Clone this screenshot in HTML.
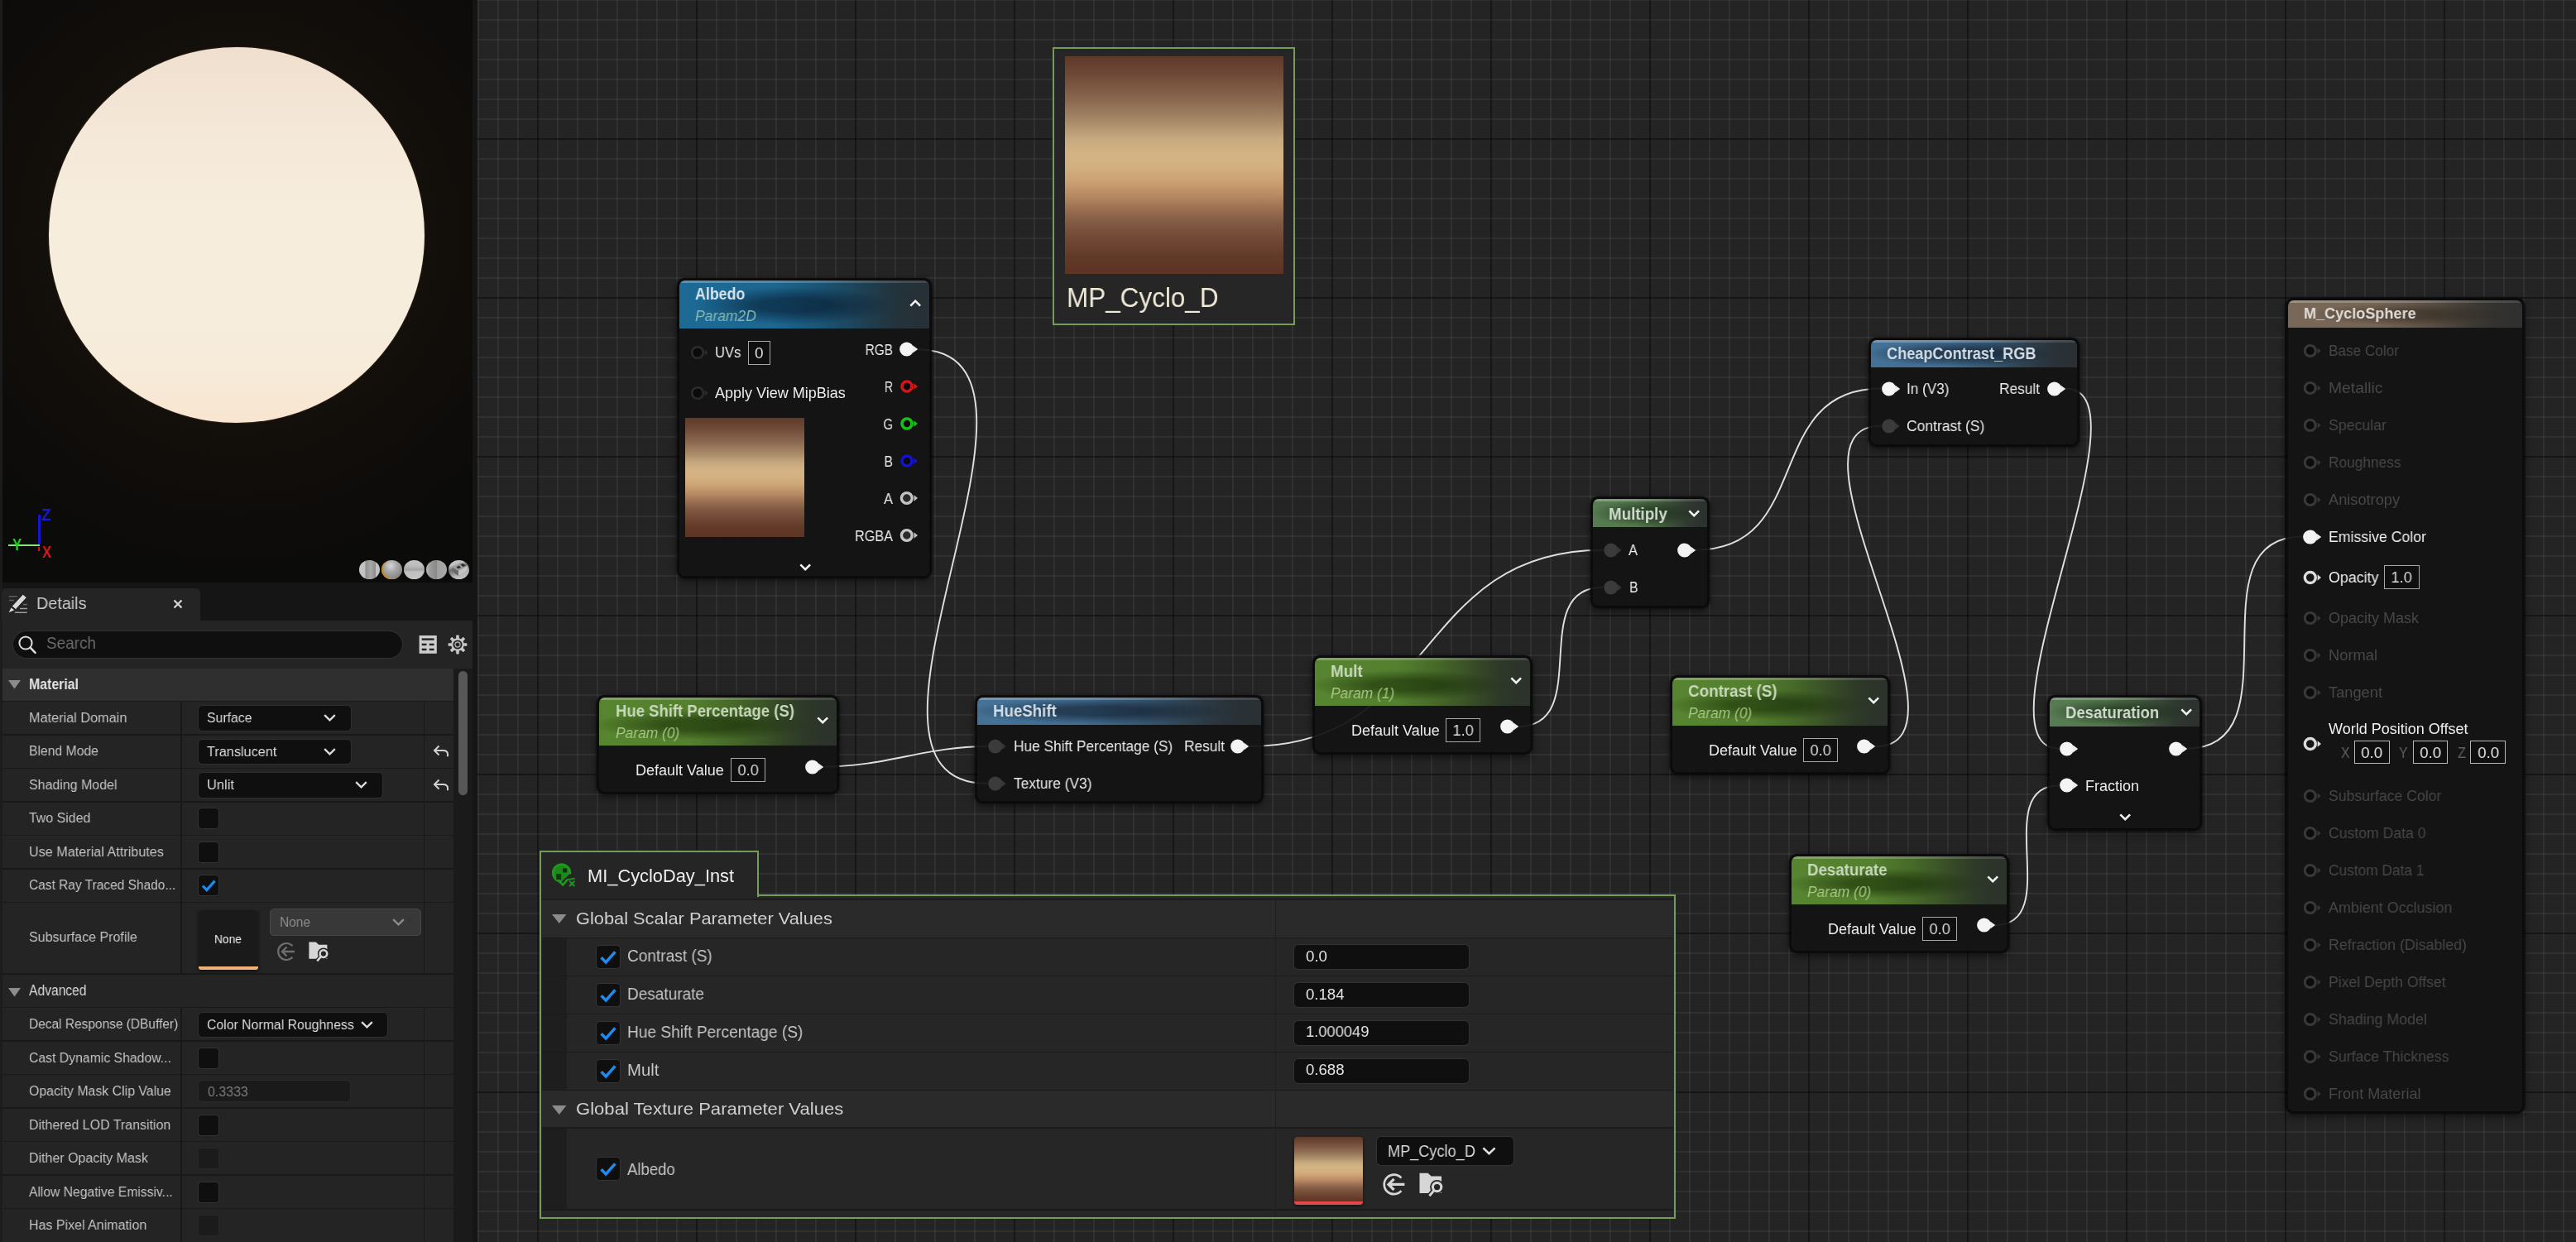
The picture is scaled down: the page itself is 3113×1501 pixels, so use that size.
<!DOCTYPE html><html><head><meta charset="utf-8"><title>Material Editor</title><style>html,body{margin:0;padding:0;background:#151515}body{width:3113px;height:1501px;position:relative;overflow:hidden;font-family:"Liberation Sans",sans-serif}.a{position:absolute;display:block}.t{position:absolute;white-space:nowrap;line-height:0;display:block;will-change:transform}</style></head><body>
<div class="a" style="left:577px;top:0;width:2536px;height:1501px;background-color:#242424;background-image:linear-gradient(90deg,rgba(0,0,0,0.55) 2px,transparent 2px),linear-gradient(180deg,rgba(0,0,0,0.55) 2px,transparent 2px),linear-gradient(90deg,rgba(255,255,255,0.055) 2px,transparent 2px),linear-gradient(180deg,rgba(255,255,255,0.055) 2px,transparent 2px);background-size:192px 192px,192px 192px,24px 24px,24px 24px;background-position:72px 0,0 167px,0px 0,0 23px"></div>
<svg class="a" style="left:0;top:0" width="3113" height="1501"><g fill="none" stroke="#e0e0e0" stroke-width="1.9"><path d="M1108.0 422.3C1317.3 422.3 983.7 947.0 1193.0 947.0"/><path d="M996.0 926.5C1072.0 926.5 1117.0 902.0 1193.0 902.0"/><path d="M1509.0 902.0C1737.4 902.0 1708.6 664.7 1937.0 664.7"/><path d="M1834.0 878.2C1927.2 878.2 1843.8 709.8 1937.0 709.8"/><path d="M2049.0 664.7C2192.9 664.7 2129.1 469.5 2273.0 469.5"/><path d="M2266.0 902.3C2401.5 902.3 2137.5 514.6 2273.0 514.6"/><path d="M2496.0 469.5C2605.7 469.5 2378.8 904.7 2488.5 904.7"/><path d="M2410.5 1118.2C2495.3 1118.2 2403.7 949.3 2488.5 949.3"/><path d="M2642.5 904.7C2778.4 904.7 2646.1 648.5 2782.0 648.5"/></g></svg>
<div class="a " style="left:1272.3px;top:57.3px;width:293.0px;height:336.0px;background:#262626;box-sizing:border-box;border:2.8px solid #759d59"></div>
<div class="a " style="left:1286.5px;top:67.7px;width:264.0px;height:263.5px;background:linear-gradient(180deg,#603a28 0%,#6e4836 8%,#8a6850 20%,#a88a68 30%,#c8aa80 38%,#d4b484 45%,#d2b080 51%,#cba274 57%,#b88a64 64%,#a07454 69%,#835c46 76%,#724a36 83%,#623a28 92%,#5e3424 100%);"></div>
<span class="t" style="left:1288.5px;top:360.4px;font-size:33.0px;color:#f0ead8;transform:scaleX(0.953);transform-origin:0 0;">MP_Cyclo_D</span>
<div class="a" style="left:820.7px;top:338.7px;width:302.3px;height:357.8px;border-radius:7px;background:rgba(18,19,18,0.94);box-shadow:0 0 0 3.2px rgba(9,9,9,.84),0 0 2px 4px rgba(9,9,9,.30),0 4px 8px 4px rgba(0,0,0,.36)"></div>
<div class="a" style="left:820.7px;top:338.7px;width:302.3px;height:58.3px;border-radius:7px 7px 0 0;background:radial-gradient(ellipse 40% 40% at 46% 52%,rgba(4,20,40,.55) 0%,rgba(4,20,40,.55) 35%,transparent 100%),linear-gradient(90deg,rgba(62,66,68,0) 58%,rgba(62,66,68,.5) 100%),linear-gradient(90deg,rgba(30,112,158,1) 0%,rgba(30,112,158,0.96) 38%,rgba(30,112,158,0.62) 68%,rgba(30,112,158,0.28) 88%,rgba(30,112,158,0.16) 100%);overflow:hidden;opacity:.94"><div style="position:absolute;left:0;top:0;right:0;height:3px;background:linear-gradient(90deg,rgba(255,255,255,.30),rgba(255,255,255,.22) 60%,rgba(255,255,255,.12))"></div></div>
<span class="t" style="left:840.0px;top:355.2px;font-size:20.4px;color:#d8e4ec;font-weight:700;transform:scaleX(0.872);transform-origin:0 0;">Albedo</span>
<span class="t" style="left:840.0px;top:381.6px;font-size:17.8px;color:#86b8b0;font-style:italic;transform:scaleX(0.984);transform-origin:0 0;">Param2D</span>
<svg class="a" style="left:1098.8px;top:361.6px;" width="14.4" height="9.0"><path d="M1.3 7.6L7.2 1.7L13.1 7.6" fill="none" stroke="#f0f0f0" stroke-width="2.6"/></svg>
<svg class="a" style="left:832.7px;top:415.5px;" width="24.0" height="20.0"><circle cx="10" cy="10" r="6.8" fill="#0a0a0a" stroke="#2c2c2c" stroke-width="2.6"/><path d="M18.6 6.6L22.6 10L18.6 13.4Z" fill="#2c2c2c"/></svg>
<span class="t" style="left:864.4px;top:426.0px;font-size:18.0px;color:#ececec;transform:scaleX(0.923);transform-origin:0 0;">UVs</span>
<div class="a" style="left:904.3px;top:412.2px;width:26.6px;height:28.6px;box-sizing:border-box;border:1.9px solid #a8a8a8;background:rgba(10,10,10,.5)"></div>
<span class="t" style="left:912.3px;top:426.8px;font-size:19.0px;color:#dedede;transform:scaleX(1.000);transform-origin:50% 0;">0</span>
<svg class="a" style="left:832.7px;top:465.4px;" width="24.0" height="20.0"><circle cx="10" cy="10" r="6.8" fill="#0a0a0a" stroke="#2c2c2c" stroke-width="2.6"/><path d="M18.6 6.6L22.6 10L18.6 13.4Z" fill="#2c2c2c"/></svg>
<span class="t" style="left:864.4px;top:475.4px;font-size:18.0px;color:#ececec;transform:scaleX(1.000);transform-origin:0 0;">Apply View MipBias</span>
<div class="a " style="left:828.0px;top:505.0px;width:144.0px;height:144.0px;background:linear-gradient(180deg,#603a28 0%,#6e4836 8%,#8a6850 20%,#a88a68 30%,#c8aa80 38%,#d4b484 45%,#d2b080 51%,#cba274 57%,#b88a64 64%,#a07454 69%,#835c46 76%,#724a36 83%,#623a28 92%,#5e3424 100%);"></div>
<svg class="a" style="left:1085.5px;top:412.3px;" width="24.0" height="20.0"><circle cx="9.7" cy="10" r="8.6" fill="#f4f4f4"/><path d="M17.2 5.4L23.2 10L17.2 14.6Z" fill="#ececec"/></svg>
<span class="t" style="left:1039.9px;top:422.6px;font-size:18.0px;color:#ececec;transform:scaleX(0.854);transform-origin:100% 0;">RGB</span>
<svg class="a" style="left:1085.5px;top:457.3px;" width="24.0" height="20.0"><circle cx="10" cy="10" r="6" fill="#0a0a0a" stroke="#d41616" stroke-width="3.6"/><path d="M18.2 6.2L23 10L18.2 13.8Z" fill="#d41616"/></svg>
<span class="t" style="left:1065.9px;top:467.6px;font-size:18.0px;color:#ececec;transform:scaleX(0.769);transform-origin:100% 0;">R</span>
<svg class="a" style="left:1085.5px;top:502.3px;" width="24.0" height="20.0"><circle cx="10" cy="10" r="6" fill="#0a0a0a" stroke="#18c018" stroke-width="3.6"/><path d="M18.2 6.2L23 10L18.2 13.8Z" fill="#18c018"/></svg>
<span class="t" style="left:1064.9px;top:512.6px;font-size:18.0px;color:#ececec;transform:scaleX(0.821);transform-origin:100% 0;">G</span>
<svg class="a" style="left:1085.5px;top:547.3px;" width="24.0" height="20.0"><circle cx="10" cy="10" r="6" fill="#0a0a0a" stroke="#1212d0" stroke-width="3.6"/><path d="M18.2 6.2L23 10L18.2 13.8Z" fill="#1212d0"/></svg>
<span class="t" style="left:1066.9px;top:557.6px;font-size:18.0px;color:#ececec;transform:scaleX(0.875);transform-origin:100% 0;">B</span>
<svg class="a" style="left:1085.5px;top:592.3px;" width="24.0" height="20.0"><circle cx="9.8" cy="10" r="6.4" fill="#2a2a2a" stroke="#c4c4c4" stroke-width="3.4"/><path d="M18.6 6.2L23 10L18.6 13.8Z" fill="#c4c4c4"/></svg>
<span class="t" style="left:1066.9px;top:602.6px;font-size:18.0px;color:#ececec;transform:scaleX(0.916);transform-origin:100% 0;">A</span>
<svg class="a" style="left:1085.5px;top:637.3px;" width="24.0" height="20.0"><circle cx="9.8" cy="10" r="6.4" fill="#2a2a2a" stroke="#c4c4c4" stroke-width="3.4"/><path d="M18.6 6.2L23 10L18.6 13.8Z" fill="#c4c4c4"/></svg>
<span class="t" style="left:1027.9px;top:647.6px;font-size:18.0px;color:#ececec;transform:scaleX(0.902);transform-origin:100% 0;">RGBA</span>
<svg class="a" style="left:966.0px;top:680.5px;" width="14.4" height="9.0"><path d="M1.3 1.3L7.2 7.2L13.1 1.3" fill="none" stroke="#f0f0f0" stroke-width="2.6"/></svg>
<div class="a" style="left:724.2px;top:842.7px;width:287.3px;height:114.8px;border-radius:7px;background:rgba(18,19,18,0.94);box-shadow:0 0 0 3.2px rgba(9,9,9,.84),0 0 2px 4px rgba(9,9,9,.30),0 4px 8px 4px rgba(0,0,0,.36)"></div>
<div class="a" style="left:724.2px;top:842.7px;width:287.3px;height:58.3px;border-radius:7px 7px 0 0;background:radial-gradient(ellipse 46% 32% at 43% 57%,rgba(16,36,0,.52) 0%,rgba(16,36,0,.52) 35%,transparent 100%),linear-gradient(90deg,rgba(62,66,68,0) 58%,rgba(62,66,68,.5) 100%),linear-gradient(90deg,rgba(92,140,50,1) 0%,rgba(92,140,50,0.96) 38%,rgba(92,140,50,0.62) 68%,rgba(92,140,50,0.28) 88%,rgba(92,140,50,0.16) 100%);overflow:hidden;opacity:.94"><div style="position:absolute;left:0;top:0;right:0;height:3px;background:linear-gradient(90deg,rgba(255,255,255,.30),rgba(255,255,255,.22) 60%,rgba(255,255,255,.12))"></div></div>
<span class="t" style="left:743.5px;top:859.0px;font-size:20.0px;color:#c8d8bc;font-weight:700;transform:scaleX(0.925);transform-origin:0 0;">Hue Shift Percentage (S)</span>
<span class="t" style="left:743.5px;top:886.0px;font-size:17.8px;color:#a6c682;font-style:italic;transform:scaleX(0.978);transform-origin:0 0;">Param (0)</span>
<svg class="a" style="left:987.3px;top:866.1px;" width="14.4" height="9.0"><path d="M1.3 1.3L7.2 7.2L13.1 1.3" fill="none" stroke="#f0f0f0" stroke-width="2.6"/></svg>
<span class="t" style="left:768.4px;top:931.1px;font-size:18.0px;color:#ececec;transform:scaleX(0.998);transform-origin:0 0;">Default Value</span>
<div class="a" style="left:883.3px;top:916.3px;width:41.8px;height:28.8px;box-sizing:border-box;border:1.9px solid #a8a8a8;background:rgba(10,10,10,.5)"></div>
<span class="t" style="left:891.0px;top:931.0px;font-size:19.0px;color:#dedede;transform:scaleX(0.965);transform-origin:50% 0;">0.0</span>
<svg class="a" style="left:972.0px;top:916.5px;" width="24.0" height="20.0"><circle cx="9.7" cy="10" r="8.6" fill="#f4f4f4"/><path d="M17.2 5.4L23.2 10L17.2 14.6Z" fill="#ececec"/></svg>
<div class="a" style="left:1588.7px;top:794.7px;width:260.3px;height:114.8px;border-radius:7px;background:rgba(18,19,18,0.94);box-shadow:0 0 0 3.2px rgba(9,9,9,.84),0 0 2px 4px rgba(9,9,9,.30),0 4px 8px 4px rgba(0,0,0,.36)"></div>
<div class="a" style="left:1588.7px;top:794.7px;width:260.3px;height:58.3px;border-radius:7px 7px 0 0;background:radial-gradient(ellipse 46% 32% at 43% 57%,rgba(16,36,0,.52) 0%,rgba(16,36,0,.52) 35%,transparent 100%),linear-gradient(90deg,rgba(62,66,68,0) 58%,rgba(62,66,68,.5) 100%),linear-gradient(90deg,rgba(92,140,50,1) 0%,rgba(92,140,50,0.96) 38%,rgba(92,140,50,0.62) 68%,rgba(92,140,50,0.28) 88%,rgba(92,140,50,0.16) 100%);overflow:hidden;opacity:.94"><div style="position:absolute;left:0;top:0;right:0;height:3px;background:linear-gradient(90deg,rgba(255,255,255,.30),rgba(255,255,255,.22) 60%,rgba(255,255,255,.12))"></div></div>
<span class="t" style="left:1608.0px;top:811.0px;font-size:20.0px;color:#c8d8bc;font-weight:700;transform:scaleX(0.939);transform-origin:0 0;">Mult</span>
<span class="t" style="left:1608.0px;top:838.0px;font-size:17.8px;color:#a6c682;font-style:italic;transform:scaleX(0.978);transform-origin:0 0;">Param (1)</span>
<svg class="a" style="left:1824.8px;top:818.1px;" width="14.4" height="9.0"><path d="M1.3 1.3L7.2 7.2L13.1 1.3" fill="none" stroke="#f0f0f0" stroke-width="2.6"/></svg>
<span class="t" style="left:1632.5px;top:882.8px;font-size:18.0px;color:#ececec;transform:scaleX(0.998);transform-origin:0 0;">Default Value</span>
<div class="a" style="left:1747.3px;top:868.0px;width:41.8px;height:28.8px;box-sizing:border-box;border:1.9px solid #a8a8a8;background:rgba(10,10,10,.5)"></div>
<span class="t" style="left:1755.0px;top:882.7px;font-size:19.0px;color:#dedede;transform:scaleX(0.965);transform-origin:50% 0;">1.0</span>
<svg class="a" style="left:1811.5px;top:868.2px;" width="24.0" height="20.0"><circle cx="9.7" cy="10" r="8.6" fill="#f4f4f4"/><path d="M17.2 5.4L23.2 10L17.2 14.6Z" fill="#ececec"/></svg>
<div class="a" style="left:2020.7px;top:818.7px;width:260.3px;height:114.8px;border-radius:7px;background:rgba(18,19,18,0.94);box-shadow:0 0 0 3.2px rgba(9,9,9,.84),0 0 2px 4px rgba(9,9,9,.30),0 4px 8px 4px rgba(0,0,0,.36)"></div>
<div class="a" style="left:2020.7px;top:818.7px;width:260.3px;height:58.3px;border-radius:7px 7px 0 0;background:radial-gradient(ellipse 46% 32% at 43% 57%,rgba(16,36,0,.52) 0%,rgba(16,36,0,.52) 35%,transparent 100%),linear-gradient(90deg,rgba(62,66,68,0) 58%,rgba(62,66,68,.5) 100%),linear-gradient(90deg,rgba(92,140,50,1) 0%,rgba(92,140,50,0.96) 38%,rgba(92,140,50,0.62) 68%,rgba(92,140,50,0.28) 88%,rgba(92,140,50,0.16) 100%);overflow:hidden;opacity:.94"><div style="position:absolute;left:0;top:0;right:0;height:3px;background:linear-gradient(90deg,rgba(255,255,255,.30),rgba(255,255,255,.22) 60%,rgba(255,255,255,.12))"></div></div>
<span class="t" style="left:2040.0px;top:835.0px;font-size:20.0px;color:#c8d8bc;font-weight:700;transform:scaleX(0.940);transform-origin:0 0;">Contrast (S)</span>
<span class="t" style="left:2040.0px;top:862.0px;font-size:17.8px;color:#a6c682;font-style:italic;transform:scaleX(0.978);transform-origin:0 0;">Param (0)</span>
<svg class="a" style="left:2256.8px;top:842.1px;" width="14.4" height="9.0"><path d="M1.3 1.3L7.2 7.2L13.1 1.3" fill="none" stroke="#f0f0f0" stroke-width="2.6"/></svg>
<span class="t" style="left:2064.7px;top:906.9px;font-size:18.0px;color:#ececec;transform:scaleX(0.998);transform-origin:0 0;">Default Value</span>
<div class="a" style="left:2179.3px;top:892.1px;width:41.8px;height:28.8px;box-sizing:border-box;border:1.9px solid #a8a8a8;background:rgba(10,10,10,.5)"></div>
<span class="t" style="left:2187.0px;top:906.8px;font-size:19.0px;color:#dedede;transform:scaleX(0.965);transform-origin:50% 0;">0.0</span>
<svg class="a" style="left:2243.0px;top:892.3px;" width="24.0" height="20.0"><circle cx="9.7" cy="10" r="8.6" fill="#f4f4f4"/><path d="M17.2 5.4L23.2 10L17.2 14.6Z" fill="#ececec"/></svg>
<div class="a" style="left:2164.7px;top:1034.7px;width:260.8px;height:114.8px;border-radius:7px;background:rgba(18,19,18,0.94);box-shadow:0 0 0 3.2px rgba(9,9,9,.84),0 0 2px 4px rgba(9,9,9,.30),0 4px 8px 4px rgba(0,0,0,.36)"></div>
<div class="a" style="left:2164.7px;top:1034.7px;width:260.8px;height:58.3px;border-radius:7px 7px 0 0;background:radial-gradient(ellipse 46% 32% at 43% 57%,rgba(16,36,0,.52) 0%,rgba(16,36,0,.52) 35%,transparent 100%),linear-gradient(90deg,rgba(62,66,68,0) 58%,rgba(62,66,68,.5) 100%),linear-gradient(90deg,rgba(92,140,50,1) 0%,rgba(92,140,50,0.96) 38%,rgba(92,140,50,0.62) 68%,rgba(92,140,50,0.28) 88%,rgba(92,140,50,0.16) 100%);overflow:hidden;opacity:.94"><div style="position:absolute;left:0;top:0;right:0;height:3px;background:linear-gradient(90deg,rgba(255,255,255,.30),rgba(255,255,255,.22) 60%,rgba(255,255,255,.12))"></div></div>
<span class="t" style="left:2184.0px;top:1051.0px;font-size:20.0px;color:#c8d8bc;font-weight:700;transform:scaleX(0.934);transform-origin:0 0;">Desaturate</span>
<span class="t" style="left:2184.0px;top:1078.0px;font-size:17.8px;color:#a6c682;font-style:italic;transform:scaleX(0.978);transform-origin:0 0;">Param (0)</span>
<svg class="a" style="left:2401.3px;top:1058.1px;" width="14.4" height="9.0"><path d="M1.3 1.3L7.2 7.2L13.1 1.3" fill="none" stroke="#f0f0f0" stroke-width="2.6"/></svg>
<span class="t" style="left:2208.5px;top:1122.8px;font-size:18.0px;color:#ececec;transform:scaleX(0.998);transform-origin:0 0;">Default Value</span>
<div class="a" style="left:2323.3px;top:1108.0px;width:41.8px;height:28.8px;box-sizing:border-box;border:1.9px solid #a8a8a8;background:rgba(10,10,10,.5)"></div>
<span class="t" style="left:2331.0px;top:1122.7px;font-size:19.0px;color:#dedede;transform:scaleX(0.965);transform-origin:50% 0;">0.0</span>
<svg class="a" style="left:2387.7px;top:1108.2px;" width="24.0" height="20.0"><circle cx="9.7" cy="10" r="8.6" fill="#f4f4f4"/><path d="M17.2 5.4L23.2 10L17.2 14.6Z" fill="#ececec"/></svg>
<div class="a" style="left:1180.7px;top:842.7px;width:343.3px;height:125.8px;border-radius:7px;background:rgba(18,19,18,0.94);box-shadow:0 0 0 3.2px rgba(9,9,9,.84),0 0 2px 4px rgba(9,9,9,.30),0 4px 8px 4px rgba(0,0,0,.36)"></div>
<div class="a" style="left:1180.7px;top:842.7px;width:343.3px;height:33.6px;border-radius:7px 7px 0 0;background:radial-gradient(ellipse 46% 46% at 43% 50%,rgba(6,14,26,.5) 0%,rgba(6,14,26,.5) 35%,transparent 100%),linear-gradient(90deg,rgba(62,66,68,0) 58%,rgba(62,66,68,.5) 100%),linear-gradient(90deg,rgba(72,120,160,1) 0%,rgba(72,120,160,0.95) 38%,rgba(72,120,160,0.6) 68%,rgba(72,120,160,0.26) 88%,rgba(72,120,160,0.14) 100%);overflow:hidden;opacity:.94"><div style="position:absolute;left:0;top:0;right:0;height:3px;background:linear-gradient(90deg,rgba(255,255,255,.30),rgba(255,255,255,.22) 60%,rgba(255,255,255,.12))"></div></div>
<span class="t" style="left:1200.0px;top:859.3px;font-size:20.0px;color:#d4dce4;font-weight:700;transform:scaleX(0.934);transform-origin:0 0;">HueShift</span>
<svg class="a" style="left:1192.5px;top:891.8px;" width="24.0" height="20.0"><circle cx="9.8" cy="10" r="8.6" fill="#3b3b3b"/><path d="M17.6 5.8L22.6 10L17.6 14.2Z" fill="#353535"/></svg>
<span class="t" style="left:1224.9px;top:901.8px;font-size:18.0px;color:#ececec;transform:scaleX(0.961);transform-origin:0 0;">Hue Shift Percentage (S)</span>
<span class="t" style="left:1428.6px;top:901.8px;font-size:18.0px;color:#ececec;transform:scaleX(0.960);transform-origin:100% 0;">Result</span>
<svg class="a" style="left:1486.3px;top:891.8px;" width="24.0" height="20.0"><circle cx="9.7" cy="10" r="8.6" fill="#f4f4f4"/><path d="M17.2 5.4L23.2 10L17.2 14.6Z" fill="#ececec"/></svg>
<svg class="a" style="left:1192.5px;top:936.9px;" width="24.0" height="20.0"><circle cx="9.8" cy="10" r="8.6" fill="#3b3b3b"/><path d="M17.6 5.8L22.6 10L17.6 14.2Z" fill="#353535"/></svg>
<span class="t" style="left:1224.9px;top:946.9px;font-size:18.0px;color:#ececec;transform:scaleX(0.964);transform-origin:0 0;">Texture (V3)</span>
<div class="a" style="left:1924.7px;top:602.7px;width:138.3px;height:129.3px;border-radius:7px;background:rgba(18,19,18,0.94);box-shadow:0 0 0 3.2px rgba(9,9,9,.84),0 0 2px 4px rgba(9,9,9,.30),0 4px 8px 4px rgba(0,0,0,.36)"></div>
<div class="a" style="left:1924.7px;top:602.7px;width:138.3px;height:34.0px;border-radius:7px 7px 0 0;background:radial-gradient(ellipse 46% 46% at 45% 50%,rgba(6,18,6,.42) 0%,rgba(6,18,6,.42) 35%,transparent 100%),linear-gradient(90deg,rgba(62,66,68,0) 58%,rgba(62,66,68,.5) 100%),linear-gradient(90deg,rgba(92,130,86,1) 0%,rgba(92,130,86,0.95) 38%,rgba(92,130,86,0.6) 68%,rgba(92,130,86,0.28) 88%,rgba(92,130,86,0.16) 100%);overflow:hidden;opacity:.94"><div style="position:absolute;left:0;top:0;right:0;height:3px;background:linear-gradient(90deg,rgba(255,255,255,.30),rgba(255,255,255,.22) 60%,rgba(255,255,255,.12))"></div></div>
<span class="t" style="left:1944.0px;top:621.0px;font-size:20.0px;color:#d0dccc;font-weight:700;transform:scaleX(0.937);transform-origin:0 0;">Multiply</span>
<svg class="a" style="left:2039.8px;top:616.0px;" width="14.4" height="9.0"><path d="M1.3 1.3L7.2 7.2L13.1 1.3" fill="none" stroke="#f0f0f0" stroke-width="2.6"/></svg>
<svg class="a" style="left:1936.5px;top:654.7px;" width="24.0" height="20.0"><circle cx="9.8" cy="10" r="8.6" fill="#3b3b3b"/><path d="M17.6 5.8L22.6 10L17.6 14.2Z" fill="#353535"/></svg>
<span class="t" style="left:1968.4px;top:664.9px;font-size:18.0px;color:#ececec;transform:scaleX(0.916);transform-origin:0 0;">A</span>
<svg class="a" style="left:2026.0px;top:654.7px;" width="24.0" height="20.0"><circle cx="9.7" cy="10" r="8.6" fill="#f4f4f4"/><path d="M17.2 5.4L23.2 10L17.2 14.6Z" fill="#ececec"/></svg>
<svg class="a" style="left:1936.5px;top:699.8px;" width="24.0" height="20.0"><circle cx="9.8" cy="10" r="8.6" fill="#3b3b3b"/><path d="M17.6 5.8L22.6 10L17.6 14.2Z" fill="#353535"/></svg>
<span class="t" style="left:1969.0px;top:710.0px;font-size:18.0px;color:#ececec;transform:scaleX(0.875);transform-origin:0 0;">B</span>
<div class="a" style="left:2260.7px;top:410.7px;width:249.3px;height:126.3px;border-radius:7px;background:rgba(18,19,18,0.94);box-shadow:0 0 0 3.2px rgba(9,9,9,.84),0 0 2px 4px rgba(9,9,9,.30),0 4px 8px 4px rgba(0,0,0,.36)"></div>
<div class="a" style="left:2260.7px;top:410.7px;width:249.3px;height:33.1px;border-radius:7px 7px 0 0;background:radial-gradient(ellipse 46% 46% at 43% 50%,rgba(6,14,26,.5) 0%,rgba(6,14,26,.5) 35%,transparent 100%),linear-gradient(90deg,rgba(62,66,68,0) 58%,rgba(62,66,68,.5) 100%),linear-gradient(90deg,rgba(72,120,160,1) 0%,rgba(72,120,160,0.95) 38%,rgba(72,120,160,0.6) 68%,rgba(72,120,160,0.26) 88%,rgba(72,120,160,0.14) 100%);overflow:hidden;opacity:.94"><div style="position:absolute;left:0;top:0;right:0;height:3px;background:linear-gradient(90deg,rgba(255,255,255,.30),rgba(255,255,255,.22) 60%,rgba(255,255,255,.12))"></div></div>
<span class="t" style="left:2280.0px;top:426.5px;font-size:20.0px;color:#d4dce4;font-weight:700;transform:scaleX(0.907);transform-origin:0 0;">CheapContrast_RGB</span>
<svg class="a" style="left:2272.7px;top:459.5px;" width="24.0" height="20.0"><circle cx="9.7" cy="10" r="8.6" fill="#f4f4f4"/><path d="M17.2 5.4L23.2 10L17.2 14.6Z" fill="#ececec"/></svg>
<span class="t" style="left:2304.3px;top:469.7px;font-size:18.0px;color:#ececec;transform:scaleX(0.953);transform-origin:0 0;">In (V3)</span>
<span class="t" style="left:2414.3px;top:469.7px;font-size:18.0px;color:#ececec;transform:scaleX(0.960);transform-origin:100% 0;">Result</span>
<svg class="a" style="left:2473.0px;top:459.5px;" width="24.0" height="20.0"><circle cx="9.7" cy="10" r="8.6" fill="#f4f4f4"/><path d="M17.2 5.4L23.2 10L17.2 14.6Z" fill="#ececec"/></svg>
<svg class="a" style="left:2272.7px;top:504.6px;" width="24.0" height="20.0"><circle cx="9.8" cy="10" r="8.6" fill="#3b3b3b"/><path d="M17.6 5.8L22.6 10L17.6 14.2Z" fill="#353535"/></svg>
<span class="t" style="left:2304.3px;top:514.8px;font-size:18.0px;color:#ececec;transform:scaleX(0.972);transform-origin:0 0;">Contrast (S)</span>
<div class="a" style="left:2476.7px;top:842.7px;width:181.3px;height:158.3px;border-radius:7px;background:rgba(18,19,18,0.94);box-shadow:0 0 0 3.2px rgba(9,9,9,.84),0 0 2px 4px rgba(9,9,9,.30),0 4px 8px 4px rgba(0,0,0,.36)"></div>
<div class="a" style="left:2476.7px;top:842.7px;width:181.3px;height:35.3px;border-radius:7px 7px 0 0;background:radial-gradient(ellipse 46% 46% at 45% 50%,rgba(6,18,6,.42) 0%,rgba(6,18,6,.42) 35%,transparent 100%),linear-gradient(90deg,rgba(62,66,68,0) 58%,rgba(62,66,68,.5) 100%),linear-gradient(90deg,rgba(92,130,86,1) 0%,rgba(92,130,86,0.95) 38%,rgba(92,130,86,0.6) 68%,rgba(92,130,86,0.28) 88%,rgba(92,130,86,0.16) 100%);overflow:hidden;opacity:.94"><div style="position:absolute;left:0;top:0;right:0;height:3px;background:linear-gradient(90deg,rgba(255,255,255,.30),rgba(255,255,255,.22) 60%,rgba(255,255,255,.12))"></div></div>
<span class="t" style="left:2496.0px;top:861.2px;font-size:20.0px;color:#d0dccc;font-weight:700;transform:scaleX(0.926);transform-origin:0 0;">Desaturation</span>
<svg class="a" style="left:2634.6px;top:855.9px;" width="14.4" height="9.0"><path d="M1.3 1.3L7.2 7.2L13.1 1.3" fill="none" stroke="#f0f0f0" stroke-width="2.6"/></svg>
<svg class="a" style="left:2488.0px;top:894.7px;" width="24.0" height="20.0"><circle cx="9.7" cy="10" r="8.6" fill="#f4f4f4"/><path d="M17.2 5.4L23.2 10L17.2 14.6Z" fill="#ececec"/></svg>
<svg class="a" style="left:2619.6px;top:894.7px;" width="24.0" height="20.0"><circle cx="9.7" cy="10" r="8.6" fill="#f4f4f4"/><path d="M17.2 5.4L23.2 10L17.2 14.6Z" fill="#ececec"/></svg>
<svg class="a" style="left:2488.0px;top:939.3px;" width="24.0" height="20.0"><circle cx="9.7" cy="10" r="8.6" fill="#f4f4f4"/><path d="M17.2 5.4L23.2 10L17.2 14.6Z" fill="#ececec"/></svg>
<span class="t" style="left:2520.4px;top:949.5px;font-size:18.0px;color:#ececec;transform:scaleX(0.997);transform-origin:0 0;">Fraction</span>
<svg class="a" style="left:2561.2px;top:983.0px;" width="14.4" height="9.0"><path d="M1.3 1.3L7.2 7.2L13.1 1.3" fill="none" stroke="#f0f0f0" stroke-width="2.6"/></svg>
<div class="a" style="left:2764.7px;top:362.7px;width:283.8px;height:980.8px;border-radius:7px;background:rgba(18,19,18,0.94);box-shadow:0 0 0 3.2px rgba(9,9,9,.84),0 0 2px 4px rgba(9,9,9,.30),0 4px 8px 4px rgba(0,0,0,.36)"></div>
<div class="a" style="left:2764.7px;top:362.7px;width:283.8px;height:32.9px;border-radius:7px 7px 0 0;background:radial-gradient(ellipse 42% 40% at 50% 52%,rgba(30,20,10,.35) 0%,rgba(30,20,10,.35) 35%,transparent 100%),linear-gradient(90deg,rgba(62,66,68,0) 58%,rgba(62,66,68,.5) 100%),linear-gradient(90deg,rgba(128,110,92,1) 0%,rgba(128,110,92,0.96) 38%,rgba(128,110,92,0.62) 68%,rgba(128,110,92,0.28) 88%,rgba(128,110,92,0.16) 100%);overflow:hidden;opacity:.94"><div style="position:absolute;left:0;top:0;right:0;height:3px;background:linear-gradient(90deg,rgba(255,255,255,.30),rgba(255,255,255,.22) 60%,rgba(255,255,255,.12))"></div></div>
<span class="t" style="left:2784.0px;top:379.3px;font-size:18.6px;color:#e0dcd8;font-weight:700;transform:scaleX(0.972);transform-origin:0 0;">M_CycloSphere</span>
<svg class="a" style="left:2781.8px;top:413.5px;" width="24.0" height="20.0"><circle cx="9.8" cy="10" r="6.5" fill="#0c0c0c" stroke="#383838" stroke-width="3.2"/><path d="M18.6 6.6L22.6 10L18.6 13.4Z" fill="#383838"/></svg>
<span class="t" style="left:2813.5px;top:423.8px;font-size:18.0px;color:#474747;transform:scaleX(0.955);transform-origin:0 0;">Base Color</span>
<svg class="a" style="left:2781.8px;top:458.5px;" width="24.0" height="20.0"><circle cx="9.8" cy="10" r="6.5" fill="#0c0c0c" stroke="#383838" stroke-width="3.2"/><path d="M18.6 6.6L22.6 10L18.6 13.4Z" fill="#383838"/></svg>
<span class="t" style="left:2813.5px;top:468.8px;font-size:18.0px;color:#474747;transform:scaleX(1.073);transform-origin:0 0;">Metallic</span>
<svg class="a" style="left:2781.8px;top:503.5px;" width="24.0" height="20.0"><circle cx="9.8" cy="10" r="6.5" fill="#0c0c0c" stroke="#383838" stroke-width="3.2"/><path d="M18.6 6.6L22.6 10L18.6 13.4Z" fill="#383838"/></svg>
<span class="t" style="left:2813.5px;top:513.8px;font-size:18.0px;color:#474747;transform:scaleX(0.985);transform-origin:0 0;">Specular</span>
<svg class="a" style="left:2781.8px;top:548.5px;" width="24.0" height="20.0"><circle cx="9.8" cy="10" r="6.5" fill="#0c0c0c" stroke="#383838" stroke-width="3.2"/><path d="M18.6 6.6L22.6 10L18.6 13.4Z" fill="#383838"/></svg>
<span class="t" style="left:2813.5px;top:558.8px;font-size:18.0px;color:#474747;transform:scaleX(0.961);transform-origin:0 0;">Roughness</span>
<svg class="a" style="left:2781.8px;top:593.5px;" width="24.0" height="20.0"><circle cx="9.8" cy="10" r="6.5" fill="#0c0c0c" stroke="#383838" stroke-width="3.2"/><path d="M18.6 6.6L22.6 10L18.6 13.4Z" fill="#383838"/></svg>
<span class="t" style="left:2813.5px;top:603.8px;font-size:18.0px;color:#474747;transform:scaleX(1.011);transform-origin:0 0;">Anisotropy</span>
<svg class="a" style="left:2781.8px;top:638.5px;" width="24.0" height="20.0"><circle cx="9.7" cy="10" r="8.6" fill="#f4f4f4"/><path d="M17.2 5.4L23.2 10L17.2 14.6Z" fill="#ececec"/></svg>
<span class="t" style="left:2813.5px;top:648.8px;font-size:18.0px;color:#f0f0f0;transform:scaleX(0.983);transform-origin:0 0;">Emissive Color</span>
<svg class="a" style="left:2781.8px;top:687.5px;" width="24.0" height="20.0"><circle cx="9.8" cy="10" r="6.5" fill="#161616" stroke="#dcdcdc" stroke-width="3.4"/><path d="M18.6 6.2L23 10L18.6 13.8Z" fill="#dcdcdc"/></svg>
<span class="t" style="left:2813.5px;top:697.8px;font-size:18.0px;color:#f0f0f0;transform:scaleX(0.991);transform-origin:0 0;">Opacity</span>
<svg class="a" style="left:2781.8px;top:737.0px;" width="24.0" height="20.0"><circle cx="9.8" cy="10" r="6.5" fill="#0c0c0c" stroke="#383838" stroke-width="3.2"/><path d="M18.6 6.6L22.6 10L18.6 13.4Z" fill="#383838"/></svg>
<span class="t" style="left:2813.5px;top:747.3px;font-size:18.0px;color:#474747;transform:scaleX(1.000);transform-origin:0 0;">Opacity Mask</span>
<svg class="a" style="left:2781.8px;top:782.0px;" width="24.0" height="20.0"><circle cx="9.8" cy="10" r="6.5" fill="#0c0c0c" stroke="#383838" stroke-width="3.2"/><path d="M18.6 6.6L22.6 10L18.6 13.4Z" fill="#383838"/></svg>
<span class="t" style="left:2813.5px;top:792.3px;font-size:18.0px;color:#474747;transform:scaleX(1.017);transform-origin:0 0;">Normal</span>
<svg class="a" style="left:2781.8px;top:827.0px;" width="24.0" height="20.0"><circle cx="9.8" cy="10" r="6.5" fill="#0c0c0c" stroke="#383838" stroke-width="3.2"/><path d="M18.6 6.6L22.6 10L18.6 13.4Z" fill="#383838"/></svg>
<span class="t" style="left:2813.5px;top:837.3px;font-size:18.0px;color:#474747;transform:scaleX(1.015);transform-origin:0 0;">Tangent</span>
<svg class="a" style="left:2781.8px;top:951.5px;" width="24.0" height="20.0"><circle cx="9.8" cy="10" r="6.5" fill="#0c0c0c" stroke="#383838" stroke-width="3.2"/><path d="M18.6 6.6L22.6 10L18.6 13.4Z" fill="#383838"/></svg>
<span class="t" style="left:2813.5px;top:961.8px;font-size:18.0px;color:#474747;transform:scaleX(0.981);transform-origin:0 0;">Subsurface Color</span>
<svg class="a" style="left:2781.8px;top:996.5px;" width="24.0" height="20.0"><circle cx="9.8" cy="10" r="6.5" fill="#0c0c0c" stroke="#383838" stroke-width="3.2"/><path d="M18.6 6.6L22.6 10L18.6 13.4Z" fill="#383838"/></svg>
<span class="t" style="left:2813.5px;top:1006.8px;font-size:18.0px;color:#474747;transform:scaleX(0.979);transform-origin:0 0;">Custom Data 0</span>
<svg class="a" style="left:2781.8px;top:1041.5px;" width="24.0" height="20.0"><circle cx="9.8" cy="10" r="6.5" fill="#0c0c0c" stroke="#383838" stroke-width="3.2"/><path d="M18.6 6.6L22.6 10L18.6 13.4Z" fill="#383838"/></svg>
<span class="t" style="left:2813.5px;top:1051.8px;font-size:18.0px;color:#474747;transform:scaleX(0.962);transform-origin:0 0;">Custom Data 1</span>
<svg class="a" style="left:2781.8px;top:1086.5px;" width="24.0" height="20.0"><circle cx="9.8" cy="10" r="6.5" fill="#0c0c0c" stroke="#383838" stroke-width="3.2"/><path d="M18.6 6.6L22.6 10L18.6 13.4Z" fill="#383838"/></svg>
<span class="t" style="left:2813.5px;top:1096.8px;font-size:18.0px;color:#474747;transform:scaleX(0.996);transform-origin:0 0;">Ambient Occlusion</span>
<svg class="a" style="left:2781.8px;top:1131.5px;" width="24.0" height="20.0"><circle cx="9.8" cy="10" r="6.5" fill="#0c0c0c" stroke="#383838" stroke-width="3.2"/><path d="M18.6 6.6L22.6 10L18.6 13.4Z" fill="#383838"/></svg>
<span class="t" style="left:2813.5px;top:1141.8px;font-size:18.0px;color:#474747;transform:scaleX(0.988);transform-origin:0 0;">Refraction (Disabled)</span>
<svg class="a" style="left:2781.8px;top:1176.5px;" width="24.0" height="20.0"><circle cx="9.8" cy="10" r="6.5" fill="#0c0c0c" stroke="#383838" stroke-width="3.2"/><path d="M18.6 6.6L22.6 10L18.6 13.4Z" fill="#383838"/></svg>
<span class="t" style="left:2813.5px;top:1186.8px;font-size:18.0px;color:#474747;transform:scaleX(0.978);transform-origin:0 0;">Pixel Depth Offset</span>
<svg class="a" style="left:2781.8px;top:1221.5px;" width="24.0" height="20.0"><circle cx="9.8" cy="10" r="6.5" fill="#0c0c0c" stroke="#383838" stroke-width="3.2"/><path d="M18.6 6.6L22.6 10L18.6 13.4Z" fill="#383838"/></svg>
<span class="t" style="left:2813.5px;top:1231.8px;font-size:18.0px;color:#474747;transform:scaleX(0.991);transform-origin:0 0;">Shading Model</span>
<svg class="a" style="left:2781.8px;top:1266.5px;" width="24.0" height="20.0"><circle cx="9.8" cy="10" r="6.5" fill="#0c0c0c" stroke="#383838" stroke-width="3.2"/><path d="M18.6 6.6L22.6 10L18.6 13.4Z" fill="#383838"/></svg>
<span class="t" style="left:2813.5px;top:1276.8px;font-size:18.0px;color:#474747;transform:scaleX(0.985);transform-origin:0 0;">Surface Thickness</span>
<svg class="a" style="left:2781.8px;top:1311.5px;" width="24.0" height="20.0"><circle cx="9.8" cy="10" r="6.5" fill="#0c0c0c" stroke="#383838" stroke-width="3.2"/><path d="M18.6 6.6L22.6 10L18.6 13.4Z" fill="#383838"/></svg>
<span class="t" style="left:2813.5px;top:1321.8px;font-size:18.0px;color:#474747;transform:scaleX(1.004);transform-origin:0 0;">Front Material</span>
<div class="a" style="left:2881.0px;top:683.4px;width:43.0px;height:28.4px;box-sizing:border-box;border:1.9px solid #a8a8a8;background:rgba(10,10,10,.5)"></div>
<span class="t" style="left:2889.3px;top:697.9px;font-size:19.0px;color:#dedede;transform:scaleX(0.965);transform-origin:50% 0;">1.0</span>
<svg class="a" style="left:2781.8px;top:889.0px;" width="24.0" height="20.0"><circle cx="9.8" cy="10" r="6.5" fill="#161616" stroke="#dcdcdc" stroke-width="3.4"/><path d="M18.6 6.2L23 10L18.6 13.8Z" fill="#dcdcdc"/></svg>
<span class="t" style="left:2813.5px;top:881.3px;font-size:18.0px;color:#f0f0f0;transform:scaleX(0.998);transform-origin:0 0;">World Position Offset</span>
<span class="t" style="left:2828.6px;top:909.5px;font-size:18.0px;color:#606060;transform:scaleX(0.875);transform-origin:0 0;">X</span>
<div class="a" style="left:2845.0px;top:895.2px;width:43.0px;height:28.2px;box-sizing:border-box;border:1.9px solid #b8b8b8;background:rgba(10,10,10,.5)"></div>
<span class="t" style="left:2853.3px;top:909.6px;font-size:19.0px;color:#e8e8e8;transform:scaleX(0.984);transform-origin:50% 0;">0.0</span>
<span class="t" style="left:2899.0px;top:909.5px;font-size:18.0px;color:#606060;transform:scaleX(0.875);transform-origin:0 0;">Y</span>
<div class="a" style="left:2915.6px;top:895.2px;width:42.6px;height:28.2px;box-sizing:border-box;border:1.9px solid #b8b8b8;background:rgba(10,10,10,.5)"></div>
<span class="t" style="left:2923.7px;top:909.6px;font-size:19.0px;color:#e8e8e8;transform:scaleX(0.984);transform-origin:50% 0;">0.0</span>
<span class="t" style="left:2969.6px;top:909.5px;font-size:18.0px;color:#606060;transform:scaleX(0.909);transform-origin:0 0;">Z</span>
<div class="a" style="left:2985.3px;top:895.2px;width:42.8px;height:28.2px;box-sizing:border-box;border:1.9px solid #b8b8b8;background:rgba(10,10,10,.5)"></div>
<span class="t" style="left:2993.5px;top:909.6px;font-size:19.0px;color:#e8e8e8;transform:scaleX(0.984);transform-origin:50% 0;">0.0</span>
<div class="a " style="left:651.8px;top:1081.0px;width:1373.2px;height:392.0px;background:#282828;box-sizing:border-box;border:2.9px solid #759d59"></div>
<div class="a " style="left:651.8px;top:1027.8px;width:265.4px;height:56.1px;background:#252525;box-sizing:border-box;border:2.9px solid #759d59;border-bottom:none"></div>
<div class="a " style="left:654.7px;top:1080.8px;width:259.6px;height:6.0px;background:#252525;"></div>
<svg class="a" style="left:665.0px;top:1042.0px;" width="34.0" height="32.0"><circle cx="13.6" cy="13" r="11.6" fill="#1a8a1a"/><circle cx="13.6" cy="13" r="10.2" fill="none" stroke="#1d9a1d" stroke-width="2.6"/><rect x="15.2" y="7.4" width="5" height="5" fill="#11300e"/><rect x="7.2" y="14.2" width="6" height="7" fill="#14380f"/><path d="M14.6 22.5L23.5 14.2L32 15.8V32H9Z" fill="#252525"/><path d="M11.2 23.8L15.2 27.4L20.6 21.2" fill="none" stroke="#1b9a1b" stroke-width="2.6"/><path d="M20 21.2L29.6 19.8" stroke="#1b8f1b" stroke-width="2"/><path d="M23.2 22.8L29.4 29M29.4 22.8L23.2 29" stroke="#1f8f2a" stroke-width="2"/></svg>
<span class="t" style="left:710.4px;top:1059.0px;font-size:21.5px;color:#f0f0f0;transform:scaleX(1.015);transform-origin:0 0;">MI_CycloDay_Inst</span>
<div class="a " style="left:654.5px;top:1087.6px;width:1367.8px;height:46.0px;background:#2a2a2a;"></div>
<div class="a " style="left:654.5px;top:1086.0px;width:1367.8px;height:1.6px;background:#1c1c1c;"></div>
<div class="a " style="left:917.0px;top:1083.9px;width:1105.0px;height:2.2px;background:#252525;"></div>
<div class="a " style="left:654.5px;top:1317.3px;width:1367.8px;height:46.0px;background:#2a2a2a;"></div>
<div class="a " style="left:655.0px;top:1133.5px;width:1367.0px;height:183.8px;background:#262626;"></div>
<div class="a " style="left:655.0px;top:1363.2px;width:1367.0px;height:98.8px;background:#262626;"></div>
<div class="a " style="left:655.0px;top:1462.0px;width:1367.0px;height:8.0px;background:#262626;"></div>
<div class="a " style="left:654.5px;top:1133.5px;width:30.2px;height:183.8px;background:#1e1e1e;"></div>
<div class="a " style="left:654.5px;top:1363.2px;width:30.2px;height:98.8px;background:#1e1e1e;"></div>
<div class="a " style="left:655.0px;top:1132.7px;width:1367.0px;height:1.6px;background:#1b1b1b;"></div>
<div class="a " style="left:655.0px;top:1178.5px;width:1367.0px;height:1.6px;background:#1b1b1b;"></div>
<div class="a " style="left:655.0px;top:1224.5px;width:1367.0px;height:1.6px;background:#1b1b1b;"></div>
<div class="a " style="left:655.0px;top:1270.5px;width:1367.0px;height:1.6px;background:#1b1b1b;"></div>
<div class="a " style="left:655.0px;top:1316.5px;width:1367.0px;height:1.6px;background:#1b1b1b;"></div>
<div class="a " style="left:655.0px;top:1362.4px;width:1367.0px;height:1.6px;background:#1b1b1b;"></div>
<div class="a " style="left:655.0px;top:1461.2px;width:1367.0px;height:1.6px;background:#1b1b1b;"></div>
<div class="a " style="left:1540.8px;top:1084.0px;width:1.6px;height:386.0px;background:#1f1f1f;"></div>
<svg class="a" style="left:667.0px;top:1105.0px;" width="18.0" height="12.0"><path d="M0 0H17.5L8.75 11Z" fill="#8c8c8c"/></svg>
<span class="t" style="left:696.0px;top:1109.6px;font-size:20.2px;color:#cfcfcf;transform:scaleX(1.080);transform-origin:0 0;">Global Scalar Parameter Values</span>
<svg class="a" style="left:667.0px;top:1336.0px;" width="18.0" height="12.0"><path d="M0 0H17.5L8.75 11Z" fill="#8c8c8c"/></svg>
<span class="t" style="left:696.0px;top:1340.2px;font-size:20.2px;color:#cfcfcf;transform:scaleX(1.094);transform-origin:0 0;">Global Texture Parameter Values</span>
<div class="a " style="left:721.0px;top:1143.1px;width:27.5px;height:27.0px;background:#0f0f0f;border-radius:4px;box-shadow:0 0 0 1px #343434"></div>
<svg class="a" style="left:721.0px;top:1143.1px;" width="27.5" height="27.0"><path d="M5.6 14.2L11.2 20L22.4 7.4" fill="none" stroke="#1d8cf2" stroke-width="3.5"/></svg>
<span class="t" style="left:757.8px;top:1154.9px;font-size:19.4px;color:#c6c6c6;transform:scaleX(0.983);transform-origin:0 0;">Contrast (S)</span>
<div class="a " style="left:1564.0px;top:1141.7px;width:210.5px;height:29.6px;background:#0f0f0f;border-radius:5px;box-shadow:0 0 0 1px #333"></div>
<span class="t" style="left:1578.0px;top:1155.5px;font-size:18.6px;color:#e4e4e4;transform:scaleX(1.006);transform-origin:0 0;">0.0</span>
<div class="a " style="left:721.0px;top:1189.0px;width:27.5px;height:27.0px;background:#0f0f0f;border-radius:4px;box-shadow:0 0 0 1px #343434"></div>
<svg class="a" style="left:721.0px;top:1189.0px;" width="27.5" height="27.0"><path d="M5.6 14.2L11.2 20L22.4 7.4" fill="none" stroke="#1d8cf2" stroke-width="3.5"/></svg>
<span class="t" style="left:757.8px;top:1200.9px;font-size:19.4px;color:#c6c6c6;transform:scaleX(0.980);transform-origin:0 0;">Desaturate</span>
<div class="a " style="left:1564.0px;top:1187.7px;width:210.5px;height:29.6px;background:#0f0f0f;border-radius:5px;box-shadow:0 0 0 1px #333"></div>
<span class="t" style="left:1578.0px;top:1201.5px;font-size:18.6px;color:#e4e4e4;transform:scaleX(0.999);transform-origin:0 0;">0.184</span>
<div class="a " style="left:721.0px;top:1235.0px;width:27.5px;height:27.0px;background:#0f0f0f;border-radius:4px;box-shadow:0 0 0 1px #343434"></div>
<svg class="a" style="left:721.0px;top:1235.0px;" width="27.5" height="27.0"><path d="M5.6 14.2L11.2 20L22.4 7.4" fill="none" stroke="#1d8cf2" stroke-width="3.5"/></svg>
<span class="t" style="left:757.8px;top:1246.8px;font-size:19.4px;color:#c6c6c6;transform:scaleX(0.985);transform-origin:0 0;">Hue Shift Percentage (S)</span>
<div class="a " style="left:1564.0px;top:1233.6px;width:210.5px;height:29.6px;background:#0f0f0f;border-radius:5px;box-shadow:0 0 0 1px #333"></div>
<span class="t" style="left:1578.0px;top:1247.4px;font-size:18.6px;color:#e4e4e4;transform:scaleX(0.986);transform-origin:0 0;">1.000049</span>
<div class="a " style="left:721.0px;top:1280.9px;width:27.5px;height:27.0px;background:#0f0f0f;border-radius:4px;box-shadow:0 0 0 1px #343434"></div>
<svg class="a" style="left:721.0px;top:1280.9px;" width="27.5" height="27.0"><path d="M5.6 14.2L11.2 20L22.4 7.4" fill="none" stroke="#1d8cf2" stroke-width="3.5"/></svg>
<span class="t" style="left:757.8px;top:1292.8px;font-size:19.4px;color:#c6c6c6;transform:scaleX(1.048);transform-origin:0 0;">Mult</span>
<div class="a " style="left:1564.0px;top:1279.5px;width:210.5px;height:29.6px;background:#0f0f0f;border-radius:5px;box-shadow:0 0 0 1px #333"></div>
<span class="t" style="left:1578.0px;top:1293.3px;font-size:18.6px;color:#e4e4e4;transform:scaleX(0.999);transform-origin:0 0;">0.688</span>
<div class="a " style="left:721.0px;top:1398.8px;width:27.5px;height:27.0px;background:#0f0f0f;border-radius:4px;box-shadow:0 0 0 1px #343434"></div>
<svg class="a" style="left:721.0px;top:1398.8px;" width="27.5" height="27.0"><path d="M5.6 14.2L11.2 20L22.4 7.4" fill="none" stroke="#1d8cf2" stroke-width="3.5"/></svg>
<span class="t" style="left:757.8px;top:1412.6px;font-size:19.4px;color:#c6c6c6;transform:scaleX(0.957);transform-origin:0 0;">Albedo</span>
<div class="a " style="left:1564.0px;top:1374.0px;width:82.5px;height:82.0px;background:linear-gradient(180deg,#603a28 0%,#6e4836 8%,#8a6850 20%,#a88a68 30%,#c8aa80 38%,#d4b484 45%,#d2b080 51%,#cba274 57%,#b88a64 64%,#a07454 69%,#835c46 76%,#724a36 83%,#623a28 92%,#5e3424 96%,#5e3424 100%);border-radius:4px;box-shadow:0 2px 4px rgba(0,0,0,.5)"></div>
<div class="a " style="left:1564.0px;top:1451.6px;width:82.5px;height:4.6px;background:#e3484a;border-radius:0 0 4px 4px"></div>
<div class="a " style="left:1664.0px;top:1374.0px;width:165.0px;height:33.5px;background:#0f0f0f;border-radius:5px;box-shadow:0 0 0 1px #333"></div>
<span class="t" style="left:1676.8px;top:1391.2px;font-size:19.4px;color:#d8d8d8;transform:scaleX(0.936);transform-origin:0 0;">MP_Cyclo_D</span>
<svg class="a" style="left:1791.0px;top:1386.0px;" width="17.0" height="10.0"><path d="M1.4 1.4L8.5 8.2L15.6 1.4" fill="none" stroke="#e0e0e0" stroke-width="2.6"/></svg>
<svg class="a" style="left:1670.0px;top:1417.0px;" width="30.0" height="30.0"><path d="M23.4 6.6A11.8 11.8 0 1 0 23.4 22.2" fill="none" stroke="#d6d6d6" stroke-width="2.7"/><path d="M27.4 14.4H9M14.6 7.8L8 14.4L14.6 21" fill="none" stroke="#d6d6d6" stroke-width="3.2"/></svg>
<svg class="a" style="left:1715.0px;top:1417.0px;" width="32.0" height="32.0"><g transform="scale(1.000)"><path d="M0.5 0.7H10.6L14.6 4.6H27V25H0.5Z" fill="#d6d6d6"/><circle cx="21.6" cy="17.6" r="8.5" fill="#262626"/><path d="M18.2 21.2L10.4 30.4" stroke="#262626" stroke-width="6"/><circle cx="21.6" cy="17.6" r="5.2" fill="none" stroke="#d6d6d6" stroke-width="3.1"/><path d="M18 21.6L12.4 28.2" stroke="#d6d6d6" stroke-width="3"/></g></svg>
<div class="a " style="left:0.0px;top:0.0px;width:577.0px;height:1501.0px;background:#151515;"></div>
<div class="a " style="left:0.0px;top:0.0px;width:3.0px;height:1501.0px;background:#1c1c1c;"></div>
<div class="a " style="left:2.5px;top:0.0px;width:568.5px;height:703.8px;background:#0b0a0a;background-image:radial-gradient(circle 420px at 283.7px 283.8px,#140f0b 0%,#130f0b 55%,#100d0a 72%,#0b0b0a 100%)"></div>
<div class="a" style="left:59.2px;top:56.8px;width:454px;height:454px;border-radius:50%;background:radial-gradient(circle at 50% 50%,rgba(250,220,190,0) 0%,rgba(250,220,190,0) 86%,rgba(248,205,165,.35) 98%,rgba(225,170,125,.7) 100%),linear-gradient(180deg,#f0dfce 0%,#f2e3d2 10%,#f5e9d9 25%,#f6eddd 42%,#f6eddd 72%,#f7ebd9 86%,#f8e5d0 100%);box-shadow:0 0 2px rgba(150,100,60,.6)"></div>
<div class="a " style="left:45.5px;top:622.0px;width:3.0px;height:36.0px;background:#1515d2;"></div>
<div class="a " style="left:10.0px;top:658.0px;width:37.5px;height:1.6px;background:#7fe87f;"></div>
<div class="a " style="left:46.0px;top:660.5px;width:2.0px;height:5.5px;background:#e01010;"></div>
<span class="t" style="left:50.2px;top:621.6px;font-size:20.5px;color:#1818d8;font-weight:700;transform:scaleX(0.926);transform-origin:0 0;">Z</span>
<span class="t" style="left:14.5px;top:657.6px;font-size:20.5px;color:#18d818;font-weight:700;transform:scaleX(0.819);transform-origin:0 0;">Y</span>
<span class="t" style="left:50.7px;top:666.8px;font-size:20.5px;color:#d81818;font-weight:700;transform:scaleX(0.819);transform-origin:0 0;">X</span>
<div class="a" style="left:434.1px;top:677.0px;width:24.5px;height:23px;border-radius:50%;background:linear-gradient(90deg,#c8c8c8 0%,#c0c0c0 28%,#8e8e8e 32%,#a8a8a8 55%,#8e8e8e 78%,#c0c0c0 82%,#c4c4c4 100%);"></div>
<div class="a" style="left:461.2px;top:677.0px;width:24.5px;height:23px;border-radius:50%;background:radial-gradient(circle at 45% 30%,#d8d6dc 0%,#a8a8a8 35%,#8a8a8a 70%,#7a7060 100%);box-shadow:inset 2px -1px 1px #c88a20;"></div>
<div class="a" style="left:488.2px;top:677.0px;width:24.5px;height:23px;border-radius:50%;background:linear-gradient(180deg,#c4c4c4 0%,#bcbcbc 30%,#a4a4a4 50%,#c0c0c0 62%,#c6c6c6 100%);"></div>
<div class="a" style="left:515.4px;top:677.0px;width:24.5px;height:23px;border-radius:50%;background:linear-gradient(90deg,#b8b8b8 0%,#9a9a9a 20%,#8a8a8a 50%,#a0a0a0 52%,#a8a8a8 100%);"></div>
<div class="a" style="left:542.4px;top:677.0px;width:24.5px;height:23px;border-radius:50%;background:linear-gradient(160deg,#c8c8c8 0%,#c0c0c0 25%,#707070 40%,#8a8a8a 55%,#b8b8b8 70%,#c8c8c8 100%);"></div>
<svg class="a" style="left:542.4px;top:677.0px;" width="24.5" height="23.0"><path d="M5 9 L14 3 L23 7 L23 12 L12 19 L5 14Z" fill="#9a9a9a"/><path d="M5 9 L12 13 L12 19 L5 14Z" fill="#6a6a6a"/><path d="M12 13 L23 7 L23 12 L12 19Z" fill="#c4c4c4"/><path d="M9.5 8.6 L12.8 6.4 L15 9 L11.5 10.2Z" fill="#2a2a2a"/><path d="M14.5 5.6 L17 4 L21 6.4 L17.5 8Z" fill="#2a2a2a"/></svg>
<div class="a " style="left:2.3px;top:711.2px;width:239.7px;height:41.0px;background:#242424;border-radius:5px 6px 0 0"></div>
<div class="a " style="left:2.5px;top:750.0px;width:568.5px;height:751.0px;background:#242424;"></div>
<svg class="a" style="left:4.0px;top:712.0px;" width="40.0" height="36.0"><g fill="none" stroke-width="1.5"><path d="M6.8 8.7H16.8M7.1 13.6H12.8" stroke="#5e5e5e"/><path d="M24 18.55H28.7" stroke="#6e6e6e"/><path d="M20 23.5H29M13.9 28.3H28.7" stroke="#9c9c9c"/></g><path d="M23.7 6.2L28.4 10L15 24.7L10.3 20.6Z" fill="#d8d8d8" stroke="#1c1c1c" stroke-width="1"/><path d="M9.5 21.9L13.9 25.5L5.7 28.9Z" fill="#dcdcdc" stroke="#1c1c1c" stroke-width=".8"/></svg>
<span class="t" style="left:44.0px;top:728.8px;font-size:20.5px;color:#c8c8c8;transform:scaleX(0.965);transform-origin:0 0;">Details</span>
<svg class="a" style="left:209.0px;top:724.0px;" width="12.0" height="12.0"><path d="M1.5 1.5L10.5 10.5M10.5 1.5L1.5 10.5" stroke="#d8d8d8" stroke-width="2.2" fill="none"/></svg>
<div class="a " style="left:15.5px;top:762.5px;width:470.5px;height:32.0px;background:#0f0f0f;border-radius:16px;box-shadow:0 0 0 1px #303030"></div>
<svg class="a" style="left:20.0px;top:766.0px;" width="26.0" height="26.0"><circle cx="11" cy="11" r="7.6" fill="none" stroke="#dcdcdc" stroke-width="2"/><path d="M16.6 16.6L22.6 22.8" stroke="#dcdcdc" stroke-width="2.6" stroke-linecap="round"/></svg>
<span class="t" style="left:56.4px;top:776.9px;font-size:20.2px;color:#6c6c6c;transform:scaleX(0.937);transform-origin:0 0;">Search</span>
<svg class="a" style="left:506.0px;top:767.0px;" width="23.0" height="24.0"><rect x="0.6" y="1" width="21.2" height="21.8" fill="#cdcdcd"/><g fill="#242424"><rect x="3.7" y="4.4" width="14.9" height="2.4"/><rect x="3.7" y="10.7" width="5.8" height="2.4"/><rect x="12.8" y="10.7" width="5.8" height="2.4"/><rect x="3.7" y="16.7" width="5.8" height="2.5"/><rect x="12.8" y="16.7" width="5.8" height="2.5"/></g></svg>
<svg class="a" style="left:541.1px;top:766.6px;" width="24.0" height="24.0"><g transform="translate(12,12)" fill="#c8c8c8"><rect x="-1.8" y="-11.4" width="3.6" height="4.6" rx="0.8" transform="rotate(0)"/><rect x="-1.8" y="-11.4" width="3.6" height="4.6" rx="0.8" transform="rotate(45)"/><rect x="-1.8" y="-11.4" width="3.6" height="4.6" rx="0.8" transform="rotate(90)"/><rect x="-1.8" y="-11.4" width="3.6" height="4.6" rx="0.8" transform="rotate(135)"/><rect x="-1.8" y="-11.4" width="3.6" height="4.6" rx="0.8" transform="rotate(180)"/><rect x="-1.8" y="-11.4" width="3.6" height="4.6" rx="0.8" transform="rotate(225)"/><rect x="-1.8" y="-11.4" width="3.6" height="4.6" rx="0.8" transform="rotate(270)"/><rect x="-1.8" y="-11.4" width="3.6" height="4.6" rx="0.8" transform="rotate(315)"/><circle r="6.7" fill="none" stroke="#c8c8c8" stroke-width="2.2"/><circle r="3" fill="none" stroke="#b0b0b0" stroke-width="1.3"/></g></svg>
<div class="a " style="left:2.5px;top:808.0px;width:545.0px;height:39.5px;background:#2f2f2f;"></div>
<svg class="a" style="left:9.5px;top:822.0px;" width="15.0" height="11.0"><path d="M0 0H15L7.5 10.5Z" fill="#8c8c8c"/></svg>
<span class="t" style="left:35.0px;top:826.8px;font-size:17.5px;color:#e4e4e4;font-weight:700;transform:scaleX(0.907);transform-origin:0 0;">Material</span>
<div class="a " style="left:547.5px;top:807.8px;width:23.7px;height:700.0px;background:#1a1a1a;"></div>
<div class="a " style="left:553.5px;top:811.0px;width:11.0px;height:150.0px;background:#575757;border-radius:5.5px"></div>
<div class="a " style="left:2.5px;top:846.8px;width:545.0px;height:1.4px;background:#191919;"></div>
<div class="a " style="left:2.5px;top:887.3px;width:545.0px;height:1.4px;background:#191919;"></div>
<div class="a " style="left:2.5px;top:927.8px;width:545.0px;height:1.4px;background:#191919;"></div>
<div class="a " style="left:2.5px;top:968.3px;width:545.0px;height:1.4px;background:#191919;"></div>
<div class="a " style="left:2.5px;top:1008.8px;width:545.0px;height:1.4px;background:#191919;"></div>
<div class="a " style="left:2.5px;top:1049.3px;width:545.0px;height:1.4px;background:#191919;"></div>
<div class="a " style="left:2.5px;top:1089.8px;width:545.0px;height:1.4px;background:#191919;"></div>
<div class="a " style="left:2.5px;top:1176.3px;width:545.0px;height:1.4px;background:#191919;"></div>
<div class="a " style="left:2.5px;top:1216.8px;width:545.0px;height:1.4px;background:#191919;"></div>
<div class="a " style="left:2.5px;top:1257.3px;width:545.0px;height:1.4px;background:#191919;"></div>
<div class="a " style="left:2.5px;top:1297.8px;width:545.0px;height:1.4px;background:#191919;"></div>
<div class="a " style="left:2.5px;top:1338.3px;width:545.0px;height:1.4px;background:#191919;"></div>
<div class="a " style="left:2.5px;top:1378.8px;width:545.0px;height:1.4px;background:#191919;"></div>
<div class="a " style="left:2.5px;top:1419.3px;width:545.0px;height:1.4px;background:#191919;"></div>
<div class="a " style="left:2.5px;top:1459.8px;width:545.0px;height:1.4px;background:#191919;"></div>
<div class="a " style="left:2.5px;top:846.8px;width:545.0px;height:1.4px;background:#191919;"></div>
<div class="a " style="left:218.3px;top:847.5px;width:1.4px;height:329.5px;background:#191919;"></div>
<div class="a " style="left:511.8px;top:847.5px;width:1.4px;height:329.5px;background:#191919;"></div>
<div class="a " style="left:218.3px;top:1217.5px;width:1.4px;height:283.5px;background:#191919;"></div>
<div class="a " style="left:511.8px;top:1217.5px;width:1.4px;height:283.5px;background:#191919;"></div>
<span class="t" style="left:35.0px;top:866.7px;font-size:17.3px;color:#c4c4c4;transform:scaleX(0.941);transform-origin:0 0;">Material Domain</span>
<div class="a " style="left:239.5px;top:853.0px;width:184.0px;height:29.5px;background:#0f0f0f;border-radius:4.5px;box-shadow:0 0 0 1px #2f2f2f"></div>
<span class="t" style="left:249.6px;top:867.0px;font-size:17.3px;color:#dcdcdc;transform:scaleX(0.914);transform-origin:0 0;">Surface</span>
<svg class="a" style="left:390.5px;top:863.4px;" width="15.0" height="9.0"><path d="M1.2 1.2L7.5 7.3L13.8 1.2" fill="none" stroke="#dcdcdc" stroke-width="2.3"/></svg>
<span class="t" style="left:35.0px;top:907.2px;font-size:17.3px;color:#c4c4c4;transform:scaleX(0.910);transform-origin:0 0;">Blend Mode</span>
<div class="a " style="left:239.5px;top:893.5px;width:184.0px;height:29.5px;background:#0f0f0f;border-radius:4.5px;box-shadow:0 0 0 1px #2f2f2f"></div>
<span class="t" style="left:249.6px;top:907.5px;font-size:17.3px;color:#dcdcdc;transform:scaleX(0.942);transform-origin:0 0;">Translucent</span>
<svg class="a" style="left:390.5px;top:903.9px;" width="15.0" height="9.0"><path d="M1.2 1.2L7.5 7.3L13.8 1.2" fill="none" stroke="#dcdcdc" stroke-width="2.3"/></svg>
<svg class="a" style="left:523.0px;top:900.0px;" width="20.0" height="16.0"><path d="M7.5 1.5L2 7L7.5 12.5M2.4 7H12.5Q18 7 18 11.5V14.2" fill="none" stroke="#d0d0d0" stroke-width="2"/></svg>
<span class="t" style="left:35.0px;top:947.7px;font-size:17.3px;color:#c4c4c4;transform:scaleX(0.924);transform-origin:0 0;">Shading Model</span>
<div class="a " style="left:239.5px;top:934.0px;width:222.3px;height:29.5px;background:#0f0f0f;border-radius:4.5px;box-shadow:0 0 0 1px #2f2f2f"></div>
<span class="t" style="left:249.6px;top:948.0px;font-size:17.3px;color:#dcdcdc;transform:scaleX(0.953);transform-origin:0 0;">Unlit</span>
<svg class="a" style="left:428.5px;top:944.4px;" width="15.0" height="9.0"><path d="M1.2 1.2L7.5 7.3L13.8 1.2" fill="none" stroke="#dcdcdc" stroke-width="2.3"/></svg>
<svg class="a" style="left:523.0px;top:940.5px;" width="20.0" height="16.0"><path d="M7.5 1.5L2 7L7.5 12.5M2.4 7H12.5Q18 7 18 11.5V14.2" fill="none" stroke="#d0d0d0" stroke-width="2"/></svg>
<span class="t" style="left:35.0px;top:988.2px;font-size:17.3px;color:#c4c4c4;transform:scaleX(0.922);transform-origin:0 0;">Two Sided</span>
<div class="a " style="left:239.5px;top:977.0px;width:24.0px;height:24.0px;background:#0f0f0f;border-radius:3.5px;box-shadow:0 0 0 1px #323232"></div>
<span class="t" style="left:35.0px;top:1028.7px;font-size:17.3px;color:#c4c4c4;transform:scaleX(0.937);transform-origin:0 0;">Use Material Attributes</span>
<div class="a " style="left:239.5px;top:1017.5px;width:24.0px;height:24.0px;background:#0f0f0f;border-radius:3.5px;box-shadow:0 0 0 1px #323232"></div>
<span class="t" style="left:35.0px;top:1069.2px;font-size:17.3px;color:#c4c4c4;transform:scaleX(0.896);transform-origin:0 0;">Cast Ray Traced Shado...</span>
<div class="a " style="left:239.5px;top:1058.0px;width:24.0px;height:24.0px;background:#0f0f0f;border-radius:3.5px;box-shadow:0 0 0 1px #323232"></div>
<svg class="a" style="left:239.5px;top:1058.0px;" width="24.0" height="24.0"><path d="M5 12.5L9.8 17.6L19.6 6.6" fill="none" stroke="#1d8cf2" stroke-width="3.2"/></svg>
<span class="t" style="left:35.0px;top:1132.2px;font-size:17.3px;color:#c4c4c4;transform:scaleX(0.927);transform-origin:0 0;">Subsurface Profile</span>
<div class="a " style="left:239.5px;top:1099.5px;width:72.5px;height:72.5px;background:#1a1a1a;border-radius:4px;box-shadow:0 2px 4px rgba(0,0,0,.5)"></div>
<div class="a " style="left:239.5px;top:1167.5px;width:72.5px;height:4.0px;background:#f2b277;border-radius:0 0 3px 3px"></div>
<span class="t" style="left:258.0px;top:1134.8px;font-size:14.6px;color:#f0f0f0;transform:scaleX(0.945);transform-origin:50% 0;">None</span>
<div class="a " style="left:327.0px;top:1099.2px;width:180.5px;height:30.8px;background:#383838;border-radius:4.5px;box-shadow:0 0 0 1px #474747"></div>
<span class="t" style="left:338.0px;top:1113.9px;font-size:17.3px;color:#8e8e8e;transform:scaleX(0.895);transform-origin:0 0;">None</span>
<svg class="a" style="left:473.5px;top:1110.2px;" width="15.0" height="9.0"><path d="M1.2 1.2L7.5 7.3L13.8 1.2" fill="none" stroke="#8e8e8e" stroke-width="2.3"/></svg>
<svg class="a" style="left:334.0px;top:1138.0px;" width="24.0" height="24.0"><path d="M19.5 5.2A10 10 0 1 0 19.5 18.8" fill="none" stroke="#6e6e6e" stroke-width="2.2"/><path d="M22 12H7.5M12.5 6.5L7 12L12.5 17.5" fill="none" stroke="#6e6e6e" stroke-width="2.4"/></svg>
<svg class="a" style="left:372.5px;top:1138.0px;" width="26.6" height="26.6"><g transform="scale(0.830)"><path d="M0.5 0.7H10.6L14.6 4.6H27V25H0.5Z" fill="#d6d6d6"/><circle cx="21.6" cy="17.6" r="8.5" fill="#242424"/><path d="M18.2 21.2L10.4 30.4" stroke="#242424" stroke-width="6"/><circle cx="21.6" cy="17.6" r="5.2" fill="none" stroke="#d6d6d6" stroke-width="3.1"/><path d="M18 21.6L12.4 28.2" stroke="#d6d6d6" stroke-width="3"/></g></svg>
<svg class="a" style="left:9.5px;top:1193.5px;" width="15.0" height="11.0"><path d="M0 0H15L7.5 10.5Z" fill="#8c8c8c"/></svg>
<span class="t" style="left:35.0px;top:1197.2px;font-size:17.5px;color:#d8d8d8;transform:scaleX(0.893);transform-origin:0 0;">Advanced</span>
<span class="t" style="left:35.0px;top:1237.2px;font-size:17.3px;color:#c4c4c4;transform:scaleX(0.895);transform-origin:0 0;">Decal Response (DBuffer)</span>
<div class="a " style="left:239.5px;top:1224.0px;width:228.5px;height:28.5px;background:#0f0f0f;border-radius:4.5px;box-shadow:0 0 0 1px #2f2f2f"></div>
<span class="t" style="left:250.0px;top:1237.5px;font-size:17.3px;color:#dcdcdc;transform:scaleX(0.916);transform-origin:0 0;">Color Normal Roughness</span>
<svg class="a" style="left:436.0px;top:1233.8px;" width="15.0" height="9.0"><path d="M1.2 1.2L7.5 7.3L13.8 1.2" fill="none" stroke="#dcdcdc" stroke-width="2.3"/></svg>
<span class="t" style="left:35.0px;top:1277.7px;font-size:17.3px;color:#c4c4c4;transform:scaleX(0.913);transform-origin:0 0;">Cast Dynamic Shadow...</span>
<div class="a " style="left:239.5px;top:1266.5px;width:24.0px;height:24.0px;background:#0f0f0f;border-radius:3.5px;box-shadow:0 0 0 1px #323232"></div>
<span class="t" style="left:35.0px;top:1318.2px;font-size:17.3px;color:#c4c4c4;transform:scaleX(0.919);transform-origin:0 0;">Opacity Mask Clip Value</span>
<div class="a " style="left:239.5px;top:1306.3px;width:183.5px;height:25.0px;background:#1a1a1a;border-radius:4.5px;box-shadow:0 0 0 1px #2a2a2a"></div>
<span class="t" style="left:250.7px;top:1319.0px;font-size:17.3px;color:#7c7c7c;transform:scaleX(0.922);transform-origin:0 0;">0.3333</span>
<span class="t" style="left:35.0px;top:1358.7px;font-size:17.3px;color:#c4c4c4;transform:scaleX(0.924);transform-origin:0 0;">Dithered LOD Transition</span>
<div class="a " style="left:239.5px;top:1347.5px;width:24.0px;height:24.0px;background:#0f0f0f;border-radius:3.5px;box-shadow:0 0 0 1px #323232"></div>
<span class="t" style="left:35.0px;top:1399.2px;font-size:17.3px;color:#c4c4c4;transform:scaleX(0.925);transform-origin:0 0;">Dither Opacity Mask</span>
<div class="a " style="left:239.5px;top:1388.0px;width:24.0px;height:24.0px;background:#1b1b1b;border-radius:3.5px;box-shadow:0 0 0 1px #282828"></div>
<span class="t" style="left:35.0px;top:1439.7px;font-size:17.3px;color:#c4c4c4;transform:scaleX(0.906);transform-origin:0 0;">Allow Negative Emissiv...</span>
<div class="a " style="left:239.5px;top:1428.5px;width:24.0px;height:24.0px;background:#0f0f0f;border-radius:3.5px;box-shadow:0 0 0 1px #323232"></div>
<span class="t" style="left:35.0px;top:1480.2px;font-size:17.3px;color:#c4c4c4;transform:scaleX(0.926);transform-origin:0 0;">Has Pixel Animation</span>
<div class="a " style="left:239.5px;top:1469.0px;width:24.0px;height:24.0px;background:#1b1b1b;border-radius:3.5px;box-shadow:0 0 0 1px #282828"></div>
</body></html>
